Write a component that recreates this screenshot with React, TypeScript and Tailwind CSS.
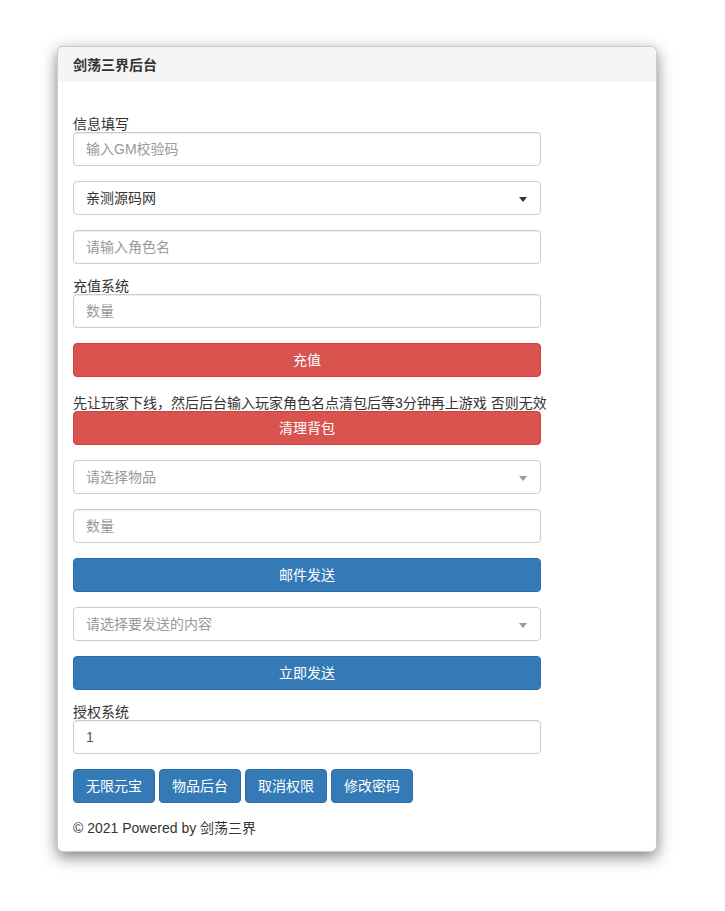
import React from "react";

const font = { fontFamily: '"Liberation Sans", "Noto Sans CJK SC", sans-serif' };

const Field = ({ placeholder, value }: { placeholder?: string; value?: string }) => (
  <input
    className="block w-[468px] h-[34px] px-3 border border-[#ccc] rounded text-sm text-[#555] placeholder:text-[#999] shadow-[inset_0_1px_1px_rgba(0,0,0,0.075)] outline-none"
    placeholder={placeholder}
    defaultValue={value}
  />
);

const SelectBox = ({ text, muted }: { text: string; muted?: boolean }) => (
  <div className="relative flex items-center w-[468px] h-[34px] pl-3 pr-5 border border-[#ccc] rounded bg-white text-sm">
    <span className={muted ? "text-[#999]" : "text-[#333]"}>{text}</span>
    <span
      className={
        "absolute right-[13px] top-[15px] w-0 h-0 border-l-4 border-r-4 border-t-[5px] border-l-transparent border-r-transparent " +
        (muted ? "border-t-[#999]" : "border-t-[#333]")
      }
    />
  </div>
);

const WideButton = ({ label, tone }: { label: string; tone: "red" | "blue" }) => (
  <button
    className={
      "block w-[468px] h-[34px] rounded border text-sm text-white " +
      (tone === "red" ? "bg-[#d9534f] border-[#d43f3a]" : "bg-[#337ab7] border-[#2e6da4]")
    }
  >
    {label}
  </button>
);

const Label = ({ children }: { children: React.ReactNode }) => (
  <div className="text-sm leading-4 text-[#333]">{children}</div>
);

export default function App() {
  return (
    <div className="min-h-[911px] bg-white pt-[46px]" style={font}>
      <div className="ml-[57px] w-[600px] bg-white border border-black/20 rounded-md shadow-[0_5px_15px_rgba(0,0,0,0.5)]">
        <div className="h-[35px] flex items-center px-[15px] bg-[#f5f5f5] rounded-t-md">
          <h3 className="text-sm font-bold text-[#333]">剑荡三界后台</h3>
        </div>

        <div className="px-[15px] pt-[34px] pb-[15px]">
          <Label>信息填写</Label>
          <Field placeholder="输入GM校验码" />
          <div className="mt-[15px]">
            <SelectBox text="亲测源码网" />
          </div>
          <div className="mt-[15px]">
            <Field placeholder="请输入角色名" />
          </div>

          <div className="mt-[14px]">
            <Label>充值系统</Label>
            <Field placeholder="数量" />
          </div>
          <div className="mt-[15px]">
            <WideButton label="充值" tone="red" />
          </div>

          <div className="mt-[18px] text-sm leading-4 text-[#333]">
            先让玩家下线，然后后台输入玩家角色名点清包后等3分钟再上游戏 否则无效
          </div>
          <WideButton label="清理背包" tone="red" />

          <div className="mt-[15px]">
            <SelectBox text="请选择物品" muted />
          </div>
          <div className="mt-[15px]">
            <Field placeholder="数量" />
          </div>
          <div className="mt-[15px]">
            <WideButton label="邮件发送" tone="blue" />
          </div>
          <div className="mt-[15px]">
            <SelectBox text="请选择要发送的内容" muted />
          </div>
          <div className="mt-[15px]">
            <WideButton label="立即发送" tone="blue" />
          </div>

          <div className="mt-[14px]">
            <Label>授权系统</Label>
            <Field value="1" />
          </div>

          <div className="mt-[15px] flex gap-1">
            {["无限元宝", "物品后台", "取消权限", "修改密码"].map((t) => (
              <button
                key={t}
                className="h-[34px] px-3 rounded border border-[#2e6da4] bg-[#337ab7] text-sm text-white"
              >
                {t}
              </button>
            ))}
          </div>

          <p className="mt-[17px] text-sm leading-4 text-[#333]">© 2021 Powered by 剑荡三界</p>
        </div>
      </div>
    </div>
  );
}
